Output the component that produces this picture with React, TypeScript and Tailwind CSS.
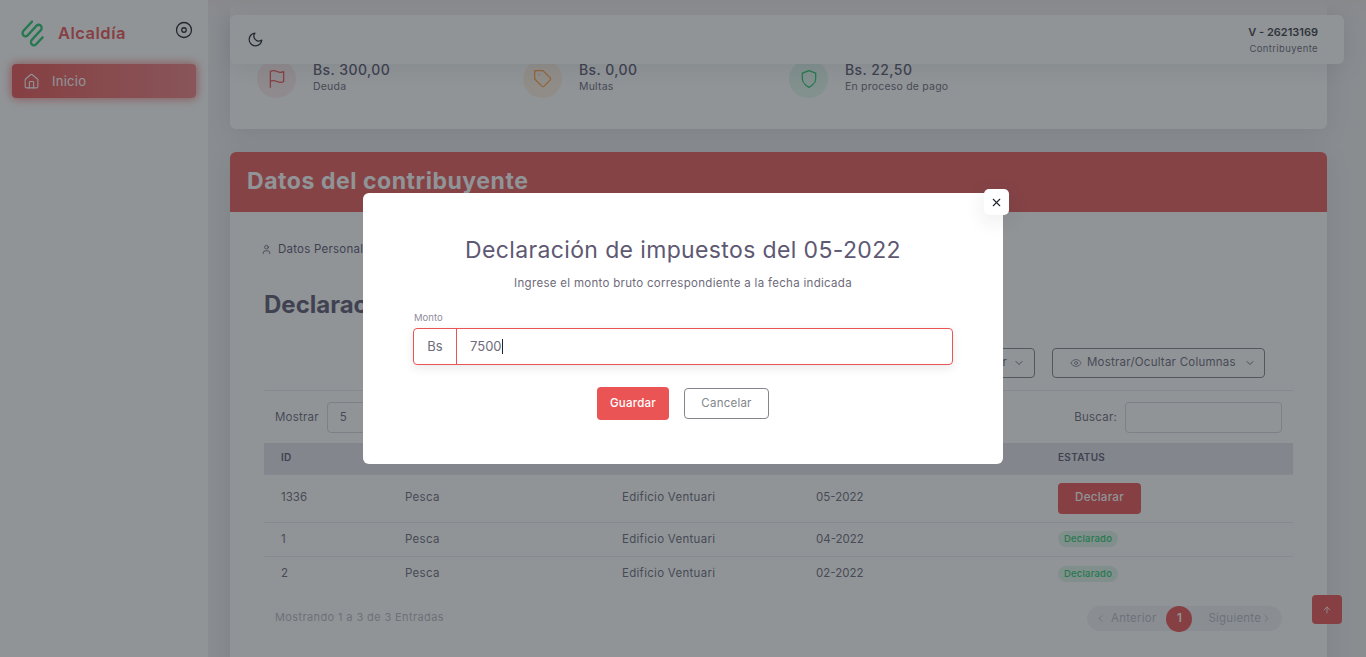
import { ArrowUp, ChevronDown, ChevronLeft, ChevronRight, Eye, House, User, X } from "lucide-react";
import type { ReactNode } from "react";

function Feather({ className, width = 1.5, children }: { className?: string; width?: number; children: ReactNode }) {
  return (
    <svg viewBox="0 0 24 24" className={className} fill="none" stroke="currentColor" strokeWidth={width} strokeLinecap="round" strokeLinejoin="round">
      {children}
    </svg>
  );
}

const stats = [
  {
    icon: (
      <Feather className="h-[20px] w-[20px] text-[#ea5455]">
        <path d="M4 15s1-1 4-1 5 2 8 2 4-1 4-1V3s-1 1-4 1-5-2-8-2-4 1-4 1z" />
        <path d="M4 22v-7" />
      </Feather>
    ),
    value: "Bs. 300,00",
    label: "Deuda",
    circle: "bg-[#fceaea]",
  },
  {
    icon: (
      <Feather className="h-[20px] w-[20px] text-[#ff9f43]">
        <path d="M20.59 13.41l-7.17 7.17a2 2 0 0 1-2.83 0L2 12V2h10l8.59 8.59a2 2 0 0 1 0 2.82z" />
        <path d="M7 7h.01" />
      </Feather>
    ),
    value: "Bs. 0,00",
    label: "Multas",
    circle: "bg-[#fff1e3]",
  },
  {
    icon: (
      <Feather className="h-[20px] w-[20px] text-[#28c76f]">
        <path d="M12 22s8-4 8-10V5l-8-3-8 3v7c0 6 8 10 8 10z" />
      </Feather>
    ),
    value: "Bs. 22,50",
    label: "En proceso de pago",
    circle: "bg-[#e2f6ec]",
  },
];

const rows = [
  { id: "1", fecha: "04-2022" },
  { id: "2", fecha: "02-2022" },
];

function Badge() {
  return (
    <span className="inline-block rounded-full bg-[#dff5e9] px-[6px] py-[1px] text-[9.5px] leading-[14px] font-medium tracking-[0.02em] text-[#28c76f]">
      Declarado
    </span>
  );
}

export default function App() {
  return (
    <div className="relative flex h-[657px] w-[1366px] overflow-hidden bg-[#f0f0f1] font-['Inter','Liberation_Sans',sans-serif] text-[#6e6b7b]">
      <aside className="h-full w-[208px] shrink-0 bg-white">
        <div className="flex h-[64px] items-start justify-between pl-[21px] pr-[15px] pt-[19px]">
          <div className="flex items-center gap-[13px]">
            <svg viewBox="0 0 24 26" preserveAspectRatio="none" className="h-[28px] w-[24px] text-[#28c76f]" fill="none" stroke="currentColor" strokeWidth="2.3" strokeLinecap="round" strokeLinejoin="round">
              <path d="M11 2.4 2.4 11A2.97 2.97 0 0 0 6.6 15.2L15.6 6.2A2.97 2.97 0 0 1 19.8 10.4L10.8 19.4A2.97 2.97 0 0 0 15 23.6L21.6 17" />
            </svg>
            <span className="text-[16.5px] font-semibold tracking-[0.03em] text-[#ea5455]">Alcaldía</span>
          </div>
          <Feather className="mt-[2px] h-[18px] w-[18px] text-[#1f2430]" width={1.7}>
            <circle cx="12" cy="12" r="10" />
            <circle cx="12" cy="12" r="3" />
          </Feather>
        </div>
        <div className="mx-[12px] flex h-[34px] items-center gap-[12px] rounded-[4px] bg-gradient-to-r from-[#ea5455] to-[#f08182] pl-[11px] text-[13px] tracking-[0.02em] text-white shadow-[0_0_10px_1px_rgba(234,84,85,0.7)]">
          <House className="h-[17px] w-[17px]" strokeWidth={1.5} />
          <span className="mt-[1px]">Inicio</span>
        </div>
      </aside>

      <main className="w-[1158px] shrink-0 pl-[22px] pr-[39px]">
        <section className="h-[129px] rounded-b-[6px] bg-white pl-[27px] pt-[60px] shadow-[0_4px_24px_rgba(34,41,47,0.1)]">
          <div className="flex">
            {stats.map((s) => (
              <div key={s.label} className="flex w-[266px] items-center gap-[17px]">
                <div className={`flex h-[38px] w-[39px] items-center justify-center rounded-full ${s.circle}`}>{s.icon}</div>
                <div className="mb-[4px]">
                  <div className="text-[14px] leading-[20px] font-medium tracking-[0.03em] text-[#5e5873]">{s.value}</div>
                  <div className="text-[10.5px] leading-[14px] tracking-[0.02em]">{s.label}</div>
                </div>
              </div>
            ))}
          </div>
        </section>

        <section className="mt-[23px] h-[520px] rounded-[6px] bg-white shadow-[0_4px_24px_rgba(34,41,47,0.1)]">
          <div className="h-[60px] rounded-t-[6px] bg-[#e85c5d] pl-[17px] pt-[14px] text-[23px] leading-[30px] font-bold tracking-[0.024em] text-white">
            Datos del contribuyente
          </div>
          <div className="px-[34px]">
            <div className="-ml-[3px] flex items-center gap-[6px] pt-[29px] text-[11.5px] leading-[16px] tracking-[0.02em] text-[#5e5873]">
              <User className="h-[11px] w-[11px]" strokeWidth={1.8} />
              <span>Datos Personales</span>
            </div>
            <h2 className="mt-[32px] text-[24px] leading-[32px] font-bold text-[#5e5873]">Declaraciones</h2>
            <div className="mt-[27px] flex justify-end gap-[17px] border-b border-[#ebe9f1] pr-[28px] pb-[12px]">
              <button className="flex h-[30px] w-[213px] items-center justify-end gap-[6px] rounded-[4px] border border-[#82868b] pr-[9px] text-[11.5px] tracking-[0.02em]">
                Exportar <ChevronDown className="h-[12px] w-[12px]" />
              </button>
              <button className="flex h-[30px] w-[213px] items-center gap-[5px] rounded-[4px] border border-[#82868b] pl-[17px] text-[11.5px] tracking-[0.02em]">
                <Eye className="h-[12px] w-[12px]" strokeWidth={1.5} /> Mostrar/Ocultar Columnas <ChevronDown className="ml-[3px] h-[12px] w-[12px]" />
              </button>
            </div>
            <div className="flex items-center justify-between px-[11px] pt-[11px] pb-[10px] text-[11.5px] tracking-[0.02em]">
              <div className="flex items-center gap-[8px]">
                <span>Mostrar</span>
                <div className="flex h-[31px] w-[60px] items-center rounded-[4px] border border-[#d8d6de] pl-[12px]">5</div>
              </div>
              <div className="flex items-center gap-[8px]">
                <span>Buscar:</span>
                <div className="h-[31px] w-[157px] rounded-[4px] border border-[#d8d6de]" />
              </div>
            </div>
            <table className="w-[1029px] table-fixed text-left text-[11.5px] tracking-[0.025em]">
              <thead>
                <tr className="h-[31px] border-b border-[#ebe9f1] bg-[#e4e3e8] text-[10px] text-[#5e5873]">
                  <th className="w-[141px] pb-[2px] pl-[17px] font-semibold">ID</th>
                  <th className="w-[217px] pb-[2px] font-semibold">RAMO</th>
                  <th className="w-[194px] pb-[2px] font-semibold">SEDE</th>
                  <th className="w-[242px] pb-[2px] font-semibold">FECHA</th>
                  <th className="pb-[2px] font-semibold">ESTATUS</th>
                </tr>
              </thead>
              <tbody>
                <tr className="h-[48px] border-b border-[#ebe9f1]">
                  <td className="pl-[17px] tracking-normal">1336</td>
                  <td>Pesca</td>
                  <td>Edificio Ventuari</td>
                  <td className="tracking-normal">05-2022</td>
                  <td>
                    <button className="h-[31px] w-[83px] rounded-[4px] bg-[#ea5455] text-[11.5px] font-medium text-white">Declarar</button>
                  </td>
                </tr>
                {rows.map((r) => (
                  <tr key={r.id} className="h-[34px] border-b border-[#ebe9f1] last:border-b-0">
                    <td className="pt-[1px] pl-[17px]">{r.id}</td>
                    <td className="pt-[1px]">Pesca</td>
                    <td className="pt-[1px]">Edificio Ventuari</td>
                    <td className="pt-[1px] tracking-normal">{r.fecha}</td>
                    <td><Badge /></td>
                  </tr>
                ))}
              </tbody>
            </table>
            <div className="mt-[16px] flex items-center justify-between pl-[11px] pr-[11px]">
              <span className="-mt-[2px] text-[11px] tracking-[0.035em] text-[#b9b9c3]">Mostrando 1 a 3 de 3 Entradas</span>
              <div className="flex h-[25px] w-[195px] items-center rounded-full bg-[#f3f2f7] text-[11.5px] tracking-[0.02em] text-[#b9b9c3]">
                <ChevronLeft className="ml-[8px] h-[11px] w-[11px]" />
                <span className="ml-[5px]">Anterior</span>
                <span className="ml-[10px] flex h-[26px] w-[26px] items-center justify-center rounded-full bg-[#ea5455] font-semibold text-white">1</span>
                <span className="ml-[16px]">Siguiente</span>
                <ChevronRight className="h-[11px] w-[11px]" />
              </div>
            </div>
          </div>
        </section>
      </main>

      {/* navbar and floating button, over the page content */}
      <div className="absolute top-0 left-[208px] h-[30px] w-[1158px] bg-gradient-to-b from-[#f0e9e9] to-transparent" />
      <header className="absolute top-[15px] left-[230px] flex h-[49px] w-[1114px] items-center justify-between rounded-[6px] bg-white pr-[26px] pl-[17px] shadow-[0_4px_24px_rgba(34,41,47,0.1)]">
        <Feather className="h-[17px] w-[17px] text-[#1f2430]" width={1.7}>
          <path d="M21 12.79A9 9 0 1 1 11.21 3 7 7 0 0 0 21 12.79z" />
        </Feather>
        <div className="mt-[3px] text-right">
          <div className="text-[11px] leading-[15px] font-semibold text-[#3f3f48]">V - 26213169</div>
          <div className="text-[9.5px] leading-[17px] tracking-[0.04em]">Contribuyente</div>
        </div>
      </header>
      <button className="absolute top-[595px] left-[1312px] flex h-[29px] w-[30px] items-center justify-center rounded-[4px] bg-[#ea5455] text-white">
        <ArrowUp className="h-[10px] w-[10px]" />
      </button>

      {/* modal */}
      <div className="absolute inset-0 flex justify-center bg-[#22292f]/50 pt-[193px]">
        <div className="relative h-[271px] w-[640px] rounded-[6px] bg-white px-[50px] text-center">
          <button className="absolute -top-[4px] -right-[6px] flex h-[26px] w-[25px] items-center justify-center rounded-[5px] bg-white text-[#1f2430] shadow-[0_5px_20px_rgba(34,41,47,0.1)]">
            <X className="h-[13px] w-[13px]" strokeWidth={2} />
          </button>
          <h1 className="pt-[41px] text-[23px] leading-[32px] font-normal tracking-[0.016em] text-[#5e5873]">Declaración de impuestos del 05-2022</h1>
          <p className="mt-[9px] text-[11.5px] leading-[16px] tracking-[0.026em]">Ingrese el monto bruto correspondiente a la fecha indicada</p>
          <label className="mt-[20px] block pl-[1px] text-left text-[9.5px] leading-[14px] text-[#8f8d9b]">Monto</label>
          <div className="mt-[3px] flex h-[37px] w-[540px] items-center rounded-[4px] border border-[#ea5455] text-left text-[13px] shadow-[0_3px_10px_rgba(34,41,47,0.1)]">
            <span className="flex h-full w-[43px] items-center justify-center border-r border-[#ea5455]">Bs</span>
            <span className="ml-[13px]">7500</span>
            <span className="h-[15px] w-px bg-[#1f2430]" />
          </div>
          <div className="mt-[22px] flex items-center justify-center gap-[15px]">
            <button className="h-[33px] w-[72px] rounded-[4px] bg-[#ea5455] text-[11.5px] font-medium tracking-[0.02em] text-white">Guardar</button>
            <button className="h-[31px] w-[85px] rounded-[4px] border border-[#82868b] text-[11.5px] tracking-[0.02em] text-[#82868b]">Cancelar</button>
          </div>
        </div>
      </div>
    </div>
  );
}
